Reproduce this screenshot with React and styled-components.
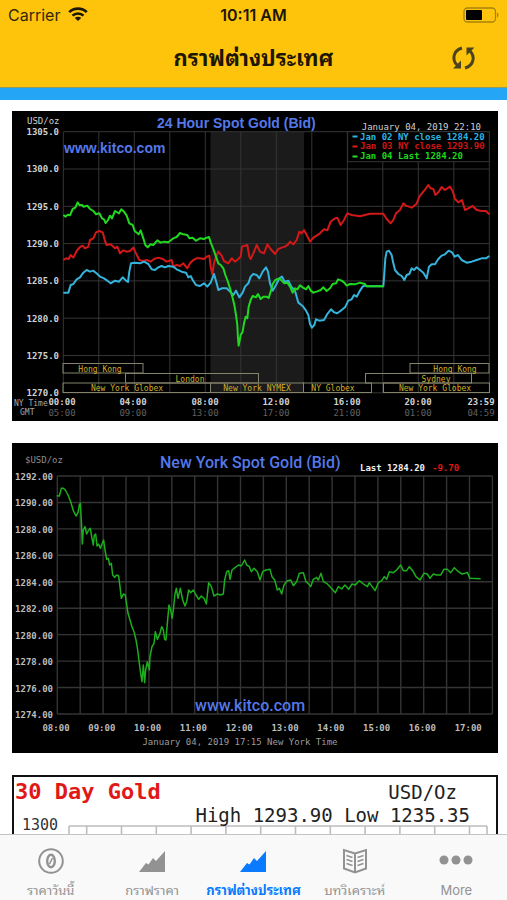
import React, { useState } from 'react';
import styled, { createGlobalStyle } from 'styled-components';

const GlobalStyle = createGlobalStyle`
  * {
    box-sizing: border-box;
  }

  body {
    margin: 0;
    background: #fff;
    font-family: Inter, 'Noto Sans Thai Looped', Loma, 'Noto Sans', sans-serif;
  }
`;

const Screen = styled.div`
  display: flex;
  flex-direction: column;
  height: 100vh;
  overflow: hidden;
`;

const Header = styled.header`
  flex: none;
  background: #fec40c;
  border-bottom: 1px solid #8f9a5c;
`;

const StatusBar = styled.div`
  display: grid;
  grid-template-columns: 1fr auto 1fr;
  align-items: center;
  height: 29px;
  padding: 0 8px;
  color: #33290a;
  font-size: 16px;
`;

const Carrier = styled.span`
  display: flex;
  align-items: center;
  gap: 8px;
`;

const Clock = styled.span`
  color: #1c1602;
  font-weight: 600;
`;

const Battery = styled.svg`
  justify-self: end;
`;

const NavBar = styled.div`
  display: grid;
  grid-template-columns: 1fr auto 1fr;
  align-items: center;
  height: 58px;
  padding: 0 28px;
`;

const Title = styled.h1`
  grid-column: 2;
  margin: 0;
  color: #1c1602;
  font-size: 22px;
  line-height: 32px;
  font-weight: 700;
`;

const RefreshButton = styled.button`
  justify-self: end;
  display: flex;
  padding: 0;
  border: none;
  background: none;
  color: #4a431c;
  cursor: pointer;
`;

const BlueStrip = styled.div`
  flex: none;
  height: 12px;
  background: #25a5f5;
`;

const Charts = styled.main`
  flex: 1;
  min-height: 0;
  display: flex;
  flex-direction: column;
  gap: 22px;
  padding: 11px 9px 22px 12px;
  overflow-y: auto;
  scrollbar-width: none;
`;

const Chart = styled.svg`
  flex: none;
  display: block;
  width: 100%;
  height: auto;
  background: ${props => props.$light ? '#fff' : '#000'};
`;

const Grid = styled.path`
  fill: none;
  stroke: ${props => props.$color || '#353535'};
  stroke-width: ${props => props.$width || 1};
`;

const Trace = styled.polyline`
  fill: none;
  stroke: ${props => props.$color};
  stroke-width: ${props => props.$width || 2};
  stroke-linejoin: round;
  vector-effect: non-scaling-stroke;
`;

const Mono = styled.text`
  font-family: 'DejaVu Sans Mono', 'Liberation Mono', monospace;
  font-size: ${props => props.$size || 9}px;
  font-weight: ${props => props.$bold ? 700 : 400};
  fill: ${props => props.$color || '#d0d0d0'};
`;

const Heading = styled.text`
  font-family: ${props => props.$narrow ? 'Roboto' : "'Liberation Sans'"}, Arial, sans-serif;
  font-size: ${props => props.$size}px;
  font-weight: ${props => props.$narrow ? 500 : 700};
  fill: #5578e8;
`;

const Session = styled.rect`
  fill: none;
  stroke: #85836c;
`;

const TabBar = styled.nav`
  flex: none;
  display: grid;
  grid-template-columns: repeat(5, 1fr);
  height: 66px;
  background: #f9f9f9;
  border-top: 1px solid #c4c4c4;
`;

const Tab = styled.button`
  display: flex;
  flex-direction: column;
  align-items: center;
  gap: 5px;
  padding: 12px 0 0;
  border: none;
  background: none;
  color: ${props => props.$active ? '#0a7aff' : '#929292'};
  font-family: inherit;
  font-size: 13px;
  line-height: 20px;
  font-weight: ${props => props.$active ? 700 : 400};
  white-space: nowrap;
  cursor: pointer;
`;

const range = (n) => Array.from({ length: n }, (_, i) => i);

const gridPath = (xs, ys) => {
  const [x0, x1, y0, y1] = [xs[0], xs[xs.length - 1], ys[0], ys[ys.length - 1]];
  return xs.map(x => `M${x} ${y0}V${y1}`).join('') + ys.map(y => `M${x0} ${y}H${x1}`).join('');
};

const jan04 = '190,330 197,335 203,329 210,331 218,312 226,308 233,292 238,300 246,300 250,305 262,302 270,312 280,318 288,328 298,325 306,340 312,343 317,354 324,345 330,332 336,340 345,318 352,322 357,325 364,313 372,320 380,332 388,355 398,360 404,378 416,388 422,376 430,400 436,420 443,427 452,418 460,420 472,406 482,413 492,410 505,412 520,400 530,396 540,384 550,388 562,390 568,400 578,398 588,407 600,400 612,402 620,398 627,396 632,412 640,432 648,455 655,475 662,480 670,490 676,510 683,528 690,550 697,575 703,600 708,630 712,660 714,700 716,722 722,690 728,680 732,655 737,635 742,640 746,605 752,585 758,573 768,577 774,567 782,582 790,575 800,575 806,579 812,560 818,537 826,525 838,520 845,527 853,535 862,533 870,545 878,563 885,550 892,553 900,541 908,547 918,553 925,543 932,557 940,563 952,559 962,555 970,547 980,558 990,550 998,537 1008,535 1014,523 1025,527 1033,533 1040,542 1050,537 1065,538 1080,533 1095,537 1100,544 1150,544';

const jan03 = '190,465 198,460 206,462 212,450 220,458 230,438 240,426 248,422 255,430 265,425 270,405 280,400 288,382 298,378 308,382 315,408 320,420 332,418 345,430 352,425 360,445 370,436 380,440 390,438 400,428 408,445 418,465 430,468 440,465 452,470 462,462 475,458 488,462 500,470 515,465 520,485 530,480 540,483 550,475 562,490 570,475 580,465 590,460 600,460 612,462 620,455 628,452 632,485 637,507 642,475 648,455 655,440 665,452 672,468 685,475 695,460 705,470 715,462 722,455 726,425 735,422 742,420 748,455 752,462 760,445 770,420 780,440 792,445 802,418 812,432 825,447 835,432 845,428 855,425 865,418 870,410 880,418 890,405 898,380 905,385 912,375 920,390 930,410 940,398 950,392 960,385 972,373 982,376 992,350 1002,342 1012,338 1022,360 1032,345 1042,325 1055,330 1080,334 1110,326 1150,326 1160,342 1172,355 1180,345 1188,325 1200,315 1210,295 1218,302 1235,308 1250,296 1258,275 1270,260 1278,250 1285,240 1292,250 1300,252 1306,270 1315,262 1325,246 1335,255 1350,245 1358,258 1365,282 1375,292 1386,285 1395,315 1405,310 1418,303 1430,315 1445,318 1458,318 1468,328';

const jan02 = '190,563 205,563 212,540 220,537 230,523 240,517 250,503 260,495 270,500 280,497 292,507 300,515 312,520 322,527 332,535 345,527 357,530 368,517 378,527 384,531 388,500 393,475 405,473 420,475 432,470 445,477 455,493 465,495 475,487 485,483 495,487 505,483 520,485 530,493 545,500 558,503 565,517 572,513 578,525 588,540 600,543 612,535 622,545 632,533 642,507 650,535 655,555 665,550 680,550 690,560 700,570 708,557 718,577 728,563 735,545 745,535 752,515 760,507 770,510 778,520 788,500 798,487 804,500 810,535 818,557 828,540 838,520 846,515 854,530 865,527 875,547 885,557 895,593 908,603 918,617 925,630 930,657 936,668 943,660 948,643 958,647 972,645 982,627 993,613 1002,622 1012,625 1025,615 1035,607 1045,587 1055,583 1062,570 1070,575 1078,560 1088,545 1095,541 1100,544 1150,544 1153,505 1156,460 1160,440 1167,437 1175,450 1180,475 1185,495 1195,507 1205,513 1213,525 1220,510 1228,507 1235,490 1242,495 1250,487 1260,495 1270,503 1280,520 1287,485 1295,478 1305,478 1315,462 1325,452 1335,448 1346,437 1356,442 1364,455 1374,450 1385,465 1400,473 1415,470 1430,465 1445,460 1458,460 1468,453';

const newYork = '170,167 178,168 184,145 190,145 196,150 204,165 212,185 220,212 228,228 234,218 238,195 241,190 244,240 247,312 250,270 255,260 260,282 266,270 271,265 276,295 280,315 283,285 287,282 291,318 296,312 301,325 306,312 311,300 315,330 320,358 325,355 329,375 334,370 338,405 344,412 350,405 356,408 360,440 364,475 370,462 376,465 378,480 384,520 390,540 396,560 402,575 408,600 413,630 418,670 422,700 426,725 430,675 434,728 437,690 442,665 448,690 450,650 456,620 462,610 466,575 472,598 480,580 485,560 490,570 494,598 498,600 502,550 507,495 512,510 516,535 520,510 525,462 529,445 534,475 541,445 548,480 555,498 560,485 566,450 572,458 580,450 588,465 596,478 604,468 612,475 619,492 626,428 634,440 642,468 652,462 662,465 670,462 674,420 680,395 686,392 690,418 696,390 706,382 716,375 724,378 734,360 740,375 748,380 754,395 762,385 772,395 780,420 788,395 798,390 810,388 816,410 824,420 832,450 838,445 845,462 852,435 862,422 872,420 880,437 890,425 898,400 910,398 918,425 926,432 932,440 940,418 950,412 955,420 963,400 970,425 980,430 990,440 1006,458 1015,440 1025,447 1035,435 1046,448 1056,432 1066,435 1078,422 1090,432 1102,440 1108,428 1125,452 1135,428 1145,422 1153,410 1160,418 1168,395 1180,398 1190,390 1202,375 1210,392 1220,392 1228,380 1238,392 1248,410 1260,420 1272,400 1282,402 1290,415 1300,402 1310,405 1322,405 1332,388 1342,388 1352,398 1363,383 1375,395 1386,402 1395,400 1402,397 1410,415 1442,416';

const sessions = [
  { x: 63, y: 363.5, width: 80, label: 'Hong Kong', center: 100 },
  { x: 410, y: 363.5, width: 79, label: 'Hong Kong', center: 455 },
  { x: 125.5, y: 373.5, width: 133, label: 'London', center: 190 },
  { x: 365.5, y: 373.5, width: 106, label: 'Sydney', center: 436 },
  { x: 63, y: 383, width: 147.5, label: 'New York Globex', center: 127 },
  { x: 210.5, y: 383, width: 93, label: 'New York NYMEX', center: 257 },
  { x: 303.5, y: 383, width: 68, label: 'NY Globex', center: 333 },
  { x: 383.5, y: 383, width: 106, label: 'New York Globex', center: 435 },
];

const dayTimes = [
  [62, '00:00', '05:00'],
  [133, '04:00', '09:00'],
  [205, '08:00', '13:00'],
  [276, '12:00', '17:00'],
  [347, '16:00', '21:00'],
  [418, '20:00', '01:00'],
  [481, '23:59', '04:59'],
];

const DayChart = () => (
  <Chart viewBox="12 111 486 310" role="img" aria-label="24 Hour Spot Gold">
    <rect x="210.5" y="132" width="93.5" height="261" fill="#1b1b1b" />
    <Grid d={gridPath(range(13).map(i => 63.3 + i * 35.5), range(8).map(i => 131.7 + i * 37.3))} />
    <rect x="347.7" y="131.7" width="141.6" height="30" fill="#000" stroke="#353535" />
    <Heading x="157" y="128" $size={14}>24 Hour Spot Gold (Bid)</Heading>
    <Heading x="64" y="153" $size={14}>www.kitco.com</Heading>
    <Mono x="27" y="124">USD/oz</Mono>
    {range(8).map(i => (
      <Mono key={i} x="59" y={135 + i * 37.3} textAnchor="end" $bold>{(1305 - i * 5).toFixed(1)}</Mono>
    ))}
    <Mono x="481" y="130" textAnchor="end">January 04, 2019 22:10</Mono>
    <path d="M352.5 136.500h5" stroke="#2cb4e0" strokeWidth="2" />
    <path d="M352.5 146.500h5" stroke="#e01c1c" strokeWidth="2" />
    <path d="M352.5 156.500h5" stroke="#22e022" strokeWidth="2" />
    <Mono x="360" y="140" $bold $color="#2cb4e0">Jan 02 NY close 1284.20</Mono>
    <Mono x="360" y="149" $bold $color="#d01414">Jan 03 NY close 1293.90</Mono>
    <Mono x="360" y="159" $bold $color="#1cd81c">Jan 04 Last 1284.20</Mono>
    {sessions.map(s => (
      <g key={s.x + s.y}>
        <Session x={s.x} y={s.y} width={s.width} height="9.500" />
        <Mono x={s.center} y={s.y + 8} textAnchor="middle" $size={8} $color="#d2ae2c">{s.label}</Mono>
      </g>
    ))}
    <g transform="translate(0 105) scale(0.33333)">
      <Trace points={jan03} $color="#d41818" />
      <Trace points={jan02} $color="#34b4dc" />
      <Trace points={jan04} $color="#20d820" />
    </g>
    <Mono x="14" y="406" $size={8} $color="#a8a8a8">NY Time</Mono>
    <Mono x="20" y="415" $size={8} $color="#a8a8a8">GMT</Mono>
    {dayTimes.map(([x, ny, gmt]) => (
      <g key={ny} textAnchor="middle">
        <Mono x={x} y="405" $bold>{ny}</Mono>
        <Mono x={x} y="416" $color="#606060">{gmt}</Mono>
      </g>
    ))}
  </Chart>
);

const NewYorkChart = () => (
  <Chart viewBox="12 443 486 310" role="img" aria-label="New York Spot Gold">
    <Grid
      $width={1.4}
      $color="#343434"
      d={gridPath(range(20).map(i => 57.3 + i * 22.9), range(10).map(i => 476 + i * 26.44))}
    />
    <Heading x="160" y="468" $size={16} $narrow>New York Spot Gold (Bid)</Heading>
    <Heading x="195" y="711" $size={16} $narrow>www.kitco.com</Heading>
    <Mono x="25" y="463" $color="#8c8c8c">$USD/oz</Mono>
    <Mono x="360" y="471" $bold $color="#f0f0f0">Last 1284.20</Mono>
    <Mono x="432" y="471" $bold $color="#e01414">-9.70</Mono>
    {range(10).map(i => (
      <Mono key={i} x="53" y={480 + i * 26.44} textAnchor="end" $bold $color="#bcbcbc">{(1292 - i * 2).toFixed(2)}</Mono>
    ))}
    {range(10).map(i => (
      <Mono key={i} x={56 + i * 45.8} y="731" textAnchor="middle" $bold $color="#bcbcbc">{`${String(8 + i).padStart(2, '0')}:00`}</Mono>
    ))}
    <Mono x="240" y="745" textAnchor="middle" $color="#9c9c9c">January 04, 2019 17:15 New York Time</Mono>
    <g transform="translate(0 440) scale(0.33333)">
      <Trace points={newYork} $color="#1cae1c" $width={1.5} />
    </g>
  </Chart>
);

const MonthChart = () => (
  <Chart viewBox="12 775 486 310" $light role="img" aria-label="30 Day Gold">
    <rect x="13" y="776" width="484" height="308" fill="#fff" stroke="#111" strokeWidth="2" />
    <Mono x="15" y="799" $size={22} $bold $color="#e01818">30 Day Gold</Mono>
    <Mono x="457" y="799" textAnchor="end" $size={19} $color="#222">USD/Oz</Mono>
    <Grid
      $color="#bdbdbd"
      $width={1.6}
      d={gridPath([69, ...range(12).map(i => 86.7 + i * 34.8), 487], [826, 861, 896, 931, 966, 1001, 1036])}
    />
    <Mono x="470" y="822" textAnchor="end" $size={19} $color="#222">High 1293.90 Low 1235.35</Mono>
    <Mono x="22" y="830" $size={15} $color="#333">1300</Mono>
  </Chart>
);

const CoinIcon = () => (
  <svg width="28" height="28" viewBox="0 0 28 28" fill="none" stroke="currentColor" strokeWidth="2">
    <circle cx="14" cy="14" r="11.800" />
    <ellipse cx="14" cy="14" rx="3.800" ry="6.300" strokeWidth="2.400" />
    <path d="M15.500 11 12.500 17" strokeWidth="1.600" />
  </svg>
);

const AreaIcon = () => (
  <svg width="28" height="28" viewBox="0 0 28 28" fill="currentColor">
    <path d="M1 25 8 16 10.500 17.500 15 11 18 14 27 4V25Z" />
  </svg>
);

const BookIcon = () => (
  <svg width="28" height="28" viewBox="0 0 28 28" fill="none" stroke="currentColor" strokeWidth="2">
    <path d="M14 6.500 3 3V21.500L14 25.500 25 21.500V3ZM14 6.500V25.500" />
    <path d="M5.500 8.500 11.500 10.500M5.500 12.500 11.500 14.500M5.500 16.500 11.500 18.500M22.500 8.500 16.500 10.500M22.500 12.500 16.500 14.500M22.500 16.500 16.500 18.500" strokeWidth="1.500" />
  </svg>
);

const MoreIcon = () => (
  <svg width="34" height="28" viewBox="0 0 34 28" fill="currentColor">
    <circle cx="5" cy="13" r="4.500" />
    <circle cx="17" cy="13" r="4.500" />
    <circle cx="29" cy="13" r="4.500" />
  </svg>
);

const tabs = [
  { id: 'today', label: 'ราคาวันนี้', Icon: CoinIcon },
  { id: 'price', label: 'กราฟราคา', Icon: AreaIcon },
  { id: 'world', label: 'กราฟต่างประเทศ', Icon: AreaIcon },
  { id: 'articles', label: 'บทวิเคราะห์', Icon: BookIcon },
  { id: 'more', label: 'More', Icon: MoreIcon },
];

const App = () => {
  const [activeTab, setActiveTab] = useState('world');

  return (
    <Screen>
      <GlobalStyle />
      <Header>
        <StatusBar>
          <Carrier>
            Carrier
            <svg width="20" height="15" viewBox="0 0 20 15" fill="none" stroke="#1c1602" strokeWidth="2.600">
              <path d="M1.200 5.200C6 .4 14 .4 18.800 5.200M4.500 8.700C7.500 5.700 12.500 5.700 15.500 8.700" />
              <path d="M10 14 6.800 10.900C8.500 9.300 11.500 9.300 13.200 10.900Z" fill="#1c1602" stroke="none" />
            </svg>
          </Carrier>
          <Clock>10:11 AM</Clock>
          <Battery width="36" height="16" viewBox="0 0 36 16" fill="none">
            <rect x="1" y="1" width="31.500" height="14" rx="3.500" stroke="#a8820c" strokeWidth="1.300" />
            <rect x="3" y="3" width="16" height="10" rx="1" fill="#000" />
            <path d="M34 5.500C36 6.500 36 9.500 34 10.500Z" fill="#a8820c" />
          </Battery>
        </StatusBar>
        <NavBar>
          <Title>กราฟต่างประเทศ</Title>
          <RefreshButton type="button" aria-label="Refresh">
            <svg width="30" height="24" viewBox="0 0 30 24" fill="none" stroke="currentColor" strokeWidth="3">
              <path d="M13 2C4 4.500 2.500 14 8.500 19.500" />
              <path d="M4 22.500H12V14.500Z" fill="currentColor" stroke="none" />
              <path d="M16 22C25 19.500 26.500 10 20.500 4.500" />
              <path d="M25.500 1.500H17.500V9.500Z" fill="currentColor" stroke="none" />
            </svg>
          </RefreshButton>
        </NavBar>
      </Header>
      <BlueStrip />
      <Charts>
        <DayChart />
        <NewYorkChart />
        <MonthChart />
      </Charts>
      <TabBar>
        {tabs.map(({ id, label, Icon }) => (
          <Tab key={id} type="button" $active={activeTab === id} onClick={() => setActiveTab(id)}>
            <Icon />
            {label}
          </Tab>
        ))}
      </TabBar>
    </Screen>
  );
};

export default App;
